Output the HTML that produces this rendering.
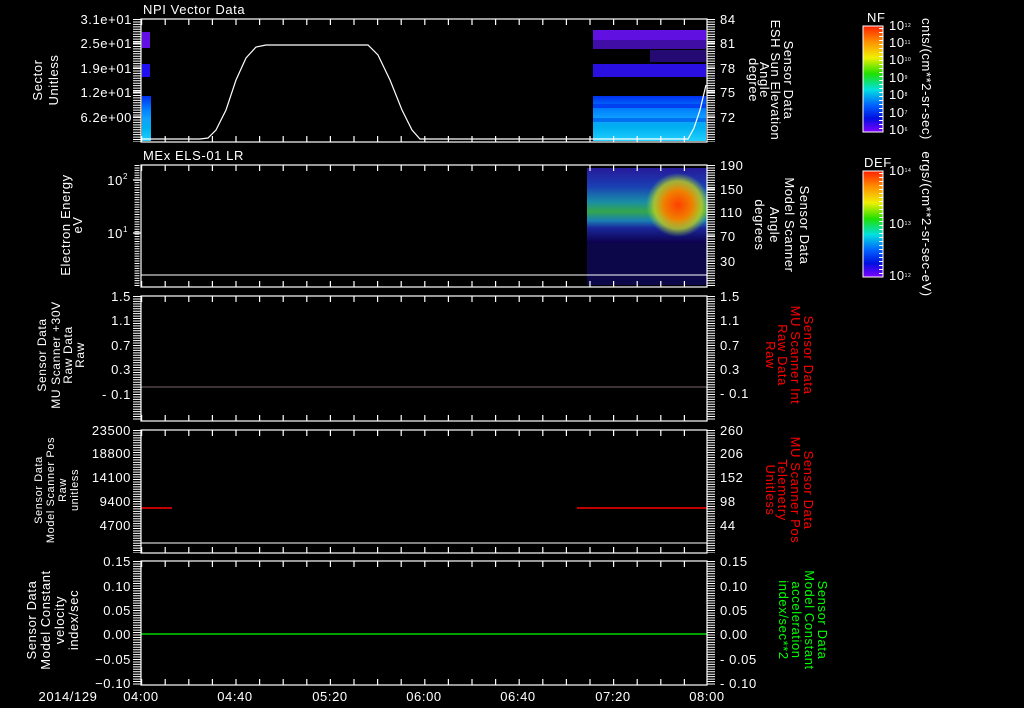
<!DOCTYPE html>
<html><head><meta charset="utf-8"><style>
html,body{margin:0;padding:0;background:#000;width:1024px;height:708px;overflow:hidden}
svg{display:block}
text{font-family:"Liberation Sans",sans-serif;fill:#fff;font-size:13px;letter-spacing:0.6px}
.s{font-size:12px}
.xs{font-size:11px}
</style></head><body>
<svg width="1024" height="708" viewBox="0 0 1024 708" xmlns="http://www.w3.org/2000/svg">
<defs>
<linearGradient id="cb" x1="0" y1="0" x2="0" y2="1">
<stop offset="0" stop-color="#ff2000"/><stop offset="0.15" stop-color="#ff9000"/><stop offset="0.3" stop-color="#f0f000"/><stop offset="0.45" stop-color="#20e000"/><stop offset="0.6" stop-color="#00e0e0"/><stop offset="0.75" stop-color="#0060ff"/><stop offset="0.87" stop-color="#0010e0"/><stop offset="1" stop-color="#8000ff"/>
</linearGradient>
<linearGradient id="sp" x1="0" y1="0" x2="0" y2="1">
<stop offset="0" stop-color="#3020c0"/><stop offset="0.25" stop-color="#2050e0"/><stop offset="0.45" stop-color="#20b0d0"/><stop offset="0.58" stop-color="#40d060"/><stop offset="0.7" stop-color="#20a0e0"/><stop offset="0.8" stop-color="#2030c0"/><stop offset="1" stop-color="#100060"/>
</linearGradient>
<radialGradient id="rd" cx="0.5" cy="0.5" r="0.5">
<stop offset="0" stop-color="#ff4000"/><stop offset="0.45" stop-color="#f08000"/><stop offset="0.75" stop-color="#c0d020" stop-opacity="0.8"/><stop offset="1" stop-color="#80d040" stop-opacity="0"/>
</radialGradient>
<linearGradient id="cy" x1="0" y1="0" x2="0" y2="1">
<stop offset="0" stop-color="#0030f0"/><stop offset="0.3" stop-color="#0080ff"/><stop offset="0.5" stop-color="#10a0ff"/><stop offset="0.7" stop-color="#00b0f0"/><stop offset="1" stop-color="#20d0ff"/>
</linearGradient>
</defs>

<rect x="142" y="32" width="8" height="16" fill="#6010e0"/>
<rect x="142" y="64" width="8" height="13" fill="#2010f0"/>
<rect x="142" y="96" width="9" height="45" fill="url(#cy)"/>
<rect x="593" y="30" width="113" height="10" fill="#6010e0"/>
<rect x="593" y="40" width="113" height="9" fill="#5010d0" opacity="0.8"/>
<rect x="650" y="50" width="56" height="12" fill="#4010c0" opacity="0.6"/>
<rect x="593" y="64" width="113" height="13" fill="#2a10e0"/>
<rect x="593" y="96" width="113" height="45" fill="url(#cy)"/>
<rect x="593" y="104" width="113" height="4" fill="#0040f0"/>
<rect x="593" y="118" width="113" height="4" fill="#0070f0"/>
<polyline fill="none" stroke="#fff" stroke-width="1.2" points="141,139 200,139 208,138 216,130 226,110 236,80 246,58 256,47 266,45 368,45 378,55 390,80 402,110 412,130 420,139 688,139 694,128 700,110 706,85"/>

<rect x="587" y="168" width="120" height="75" fill="url(#sp)" opacity="0.8"/>
<rect x="587" y="243" width="120" height="42" fill="#1a10a0" opacity="0.45"/>
<ellipse cx="678" cy="205" rx="32" ry="32" fill="url(#rd)"/>
<line x1="141" y1="275" x2="707" y2="275" stroke="#fff"/>

<line x1="141" y1="387" x2="707" y2="387" stroke="#7a6a6a"/>
<line x1="141" y1="508" x2="172" y2="508" stroke="#f00" stroke-width="1.5"/>
<line x1="577" y1="508" x2="707" y2="508" stroke="#f00" stroke-width="1.5"/>
<line x1="141" y1="634" x2="707" y2="634" stroke="#0f0" stroke-width="1.2"/>
<line x1="141" y1="543" x2="707" y2="543" stroke="#fff"/>

<g fill="none" stroke="#fff" stroke-width="1.2">
<rect x="141" y="19" width="566" height="123"/>
<rect x="141" y="165" width="566" height="122"/>
<rect x="141" y="296" width="566" height="125"/>
<rect x="141" y="430" width="566" height="123"/>
<rect x="141" y="561" width="566" height="124"/>
</g>
<g stroke="#fff" stroke-dasharray="1 1.45">
<line x1="137" y1="19" x2="137" y2="142" stroke-width="8"/>
<line x1="711" y1="19" x2="711" y2="142" stroke-width="8"/>
<line x1="137" y1="165" x2="137" y2="287" stroke-width="5"/>
<line x1="711" y1="165" x2="711" y2="287" stroke-width="8"/>
<line x1="137" y1="296" x2="137" y2="421" stroke-width="8"/>
<line x1="711" y1="296" x2="711" y2="421" stroke-width="8"/>
<line x1="137" y1="430" x2="137" y2="553" stroke-width="8"/>
<line x1="711" y1="430" x2="711" y2="553" stroke-width="8"/>
<line x1="137" y1="561" x2="137" y2="685" stroke-width="8"/>
<line x1="711" y1="561" x2="711" y2="685" stroke-width="8"/>
</g>
<g stroke="#fff" stroke-width="1.2">
<path d="M133 43h8M133 68h8M133 92h8M133 117h8M707 43h8M707 68h8M707 92h8M707 117h8"/>
<path d="M133 180h8M133 233h8M707 189h8M707 212h8M707 236h8M707 261h8"/>
</g>
<g stroke="#fff" stroke-width="1.2" stroke-dasharray="1.2 22.4">
<line x1="141" y1="22" x2="707" y2="22" stroke-width="6"/><line x1="141" y1="139" x2="707" y2="139" stroke-width="6"/>
<line x1="141" y1="168" x2="707" y2="168" stroke-width="6"/><line x1="141" y1="284" x2="707" y2="284" stroke-width="6"/>
<line x1="141" y1="299" x2="707" y2="299" stroke-width="6"/><line x1="141" y1="418" x2="707" y2="418" stroke-width="6"/>
<line x1="141" y1="433" x2="707" y2="433" stroke-width="6"/><line x1="141" y1="550" x2="707" y2="550" stroke-width="6"/>
<line x1="141" y1="564" x2="707" y2="564" stroke-width="6"/><line x1="141" y1="682" x2="707" y2="682" stroke-width="6"/>
</g>

<text x="143" y="14" font-size="14">NPI Vector Data</text>
<text x="143" y="160" font-size="14">MEx ELS-01 LR</text>

<g text-anchor="end">
<text x="132" y="24">3.1e+01</text><text x="132" y="48">2.5e+01</text><text x="132" y="73">1.9e+01</text><text x="132" y="97">1.2e+01</text><text x="132" y="122">6.2e+00</text>
<text x="128" y="185" font-size="14">10<tspan font-size="8" dy="-6">2</tspan></text><text x="128" y="238" font-size="14">10<tspan font-size="8" dy="-6">1</tspan></text>
<text x="131" y="301">1.5</text><text x="131" y="325">1.1</text><text x="131" y="350">0.7</text><text x="131" y="374">0.3</text><text x="131" y="399">- 0.1</text>
<text x="131" y="435">23500</text><text x="131" y="458">18800</text><text x="131" y="482">14100</text><text x="131" y="506">9400</text><text x="131" y="530">4700</text>
<text x="131" y="566">0.15</text><text x="131" y="591">0.10</text><text x="131" y="615">0.05</text><text x="131" y="639">0.00</text><text x="131" y="664">−0.05</text><text x="131" y="688">−0.10</text>
</g>
<g>
<text x="720" y="24">84</text><text x="720" y="48">81</text><text x="720" y="73">78</text><text x="720" y="97">75</text><text x="720" y="122">72</text>
<text x="720" y="170">190</text><text x="720" y="194">150</text><text x="720" y="217">110</text><text x="720" y="241">70</text><text x="720" y="266">30</text>
<text x="720" y="301">1.5</text><text x="720" y="325">1.1</text><text x="720" y="350">0.7</text><text x="720" y="374">0.3</text><text x="720" y="398">- 0.1</text>
<text x="720" y="435">260</text><text x="720" y="458">206</text><text x="720" y="482">152</text><text x="720" y="506">98</text><text x="720" y="530">44</text>
<text x="720" y="566">0.15</text><text x="720" y="591">0.10</text><text x="720" y="615">0.05</text><text x="720" y="639">0.00</text><text x="720" y="664">- 0.05</text><text x="720" y="688">- 0.10</text>
</g>
<g text-anchor="middle">
<text x="68" y="701" font-size="15">2014/129</text>
<text x="141" y="701" font-size="15">04:00</text><text x="235" y="701" font-size="15">04:40</text><text x="330" y="701" font-size="15">05:20</text><text x="424" y="701" font-size="15">06:00</text><text x="518" y="701" font-size="15">06:40</text><text x="613" y="701" font-size="15">07:20</text><text x="707" y="701" font-size="15">08:00</text>
</g>

<g text-anchor="middle">
<text transform="translate(42,80) rotate(-90)" font-size="17">Sector</text>
<text transform="translate(58,80) rotate(-90)" font-size="17">Unitless</text>
<text transform="translate(70,225) rotate(-90)">Electron Energy</text>
<text transform="translate(82,225) rotate(-90)">eV</text>
<text transform="translate(46,355) rotate(-90)" class="s">Sensor Data</text>
<text transform="translate(60,355) rotate(-90)" class="s">MU Scanner +30V</text>
<text transform="translate(72,355) rotate(-90)" class="s">Raw Data</text>
<text transform="translate(84,355) rotate(-90)" class="s">Raw</text>
<text transform="translate(42,490) rotate(-90)" class="xs">Sensor Data</text>
<text transform="translate(54,490) rotate(-90)" class="xs">Model Scanner Pos</text>
<text transform="translate(66,490) rotate(-90)" class="xs">Raw</text>
<text transform="translate(78,490) rotate(-90)" class="xs">unitless</text>
<text transform="translate(36,620) rotate(-90)" font-size="14">Sensor Data</text>
<text transform="translate(50,620) rotate(-90)" font-size="14">Model Constant</text>
<text transform="translate(64,620) rotate(-90)" font-size="14">velocity</text>
<text transform="translate(78,620) rotate(-90)" font-size="14">index/sec</text>
</g>
<g text-anchor="middle">
<text transform="translate(784,80) rotate(90)">Sensor Data</text>
<text transform="translate(771,80) rotate(90)">ESH Sun Elevation</text>
<text transform="translate(760,80) rotate(90)">Angle</text>
<text transform="translate(749,80) rotate(90)">degree</text>
<text transform="translate(800,225) rotate(90)" font-size="16">Sensor Data</text>
<text transform="translate(785,225) rotate(90)" font-size="16">Model Scanner</text>
<text transform="translate(770,225) rotate(90)" font-size="16">Angle</text>
<text transform="translate(755,225) rotate(90)" font-size="16">degrees</text>
<text transform="translate(804,355) rotate(90)" style="fill:#f00">Sensor Data</text>
<text transform="translate(791,355) rotate(90)" style="fill:#f00">MU Scanner Int</text>
<text transform="translate(778,355) rotate(90)" style="fill:#f00">Raw Data</text>
<text transform="translate(766,355) rotate(90)" style="fill:#f00">Raw</text>
<text transform="translate(804,490) rotate(90)" style="fill:#f00">Sensor Data</text>
<text transform="translate(791,490) rotate(90)" style="fill:#f00">MU Scanner Pos</text>
<text transform="translate(778,490) rotate(90)" style="fill:#f00">Telemetry</text>
<text transform="translate(766,490) rotate(90)" style="fill:#f00">Unitless</text>
<text transform="translate(818,620) rotate(90)" style="fill:#0f0">Sensor Data</text>
<text transform="translate(805,620) rotate(90)" style="fill:#0f0">Model Constant</text>
<text transform="translate(792,620) rotate(90)" style="fill:#0f0">acceleration</text>
<text transform="translate(779,620) rotate(90)" style="fill:#0f0">index/sec**2</text>
</g>

<rect x="863" y="26" width="20" height="106" fill="url(#cb)" stroke="#fff"/>
<rect x="863" y="171" width="20" height="106" fill="url(#cb)" stroke="#fff"/>
<g stroke="#fff" stroke-dasharray="1 3" stroke-width="4">
<line x1="881" y1="28" x2="881" y2="131"/>
<line x1="881" y1="173" x2="881" y2="276"/>
</g>
<text x="867" y="22" font-size="8">NF</text>
<text x="864" y="167" font-size="8">DEF</text>
<g font-size="7">
<text x="889" y="30" font-size="7">10<tspan dy="-3" font-size="5">12</tspan></text>
<text x="889" y="47" font-size="7">10<tspan dy="-3" font-size="5">11</tspan></text>
<text x="889" y="64" font-size="7">10<tspan dy="-3" font-size="5">10</tspan></text>
<text x="889" y="82" font-size="7">10<tspan dy="-3" font-size="5">9</tspan></text>
<text x="889" y="99" font-size="7">10<tspan dy="-3" font-size="5">8</tspan></text>
<text x="889" y="117" font-size="7">10<tspan dy="-3" font-size="5">7</tspan></text>
<text x="889" y="134" font-size="7">10<tspan dy="-3" font-size="5">6</tspan></text>
<text x="889" y="175" font-size="7">10<tspan dy="-3" font-size="5">14</tspan></text>
<text x="889" y="228" font-size="7">10<tspan dy="-3" font-size="5">13</tspan></text>
<text x="889" y="280" font-size="7">10<tspan dy="-3" font-size="5">12</tspan></text>
</g>
<text transform="translate(922,79) rotate(90)" font-size="9" text-anchor="middle">cnts/(cm**2-sr-sec)</text>
<text transform="translate(922,224) rotate(90)" font-size="9" text-anchor="middle">ergs/(cm**2-sr-sec-eV)</text>
</svg>
</body></html>
